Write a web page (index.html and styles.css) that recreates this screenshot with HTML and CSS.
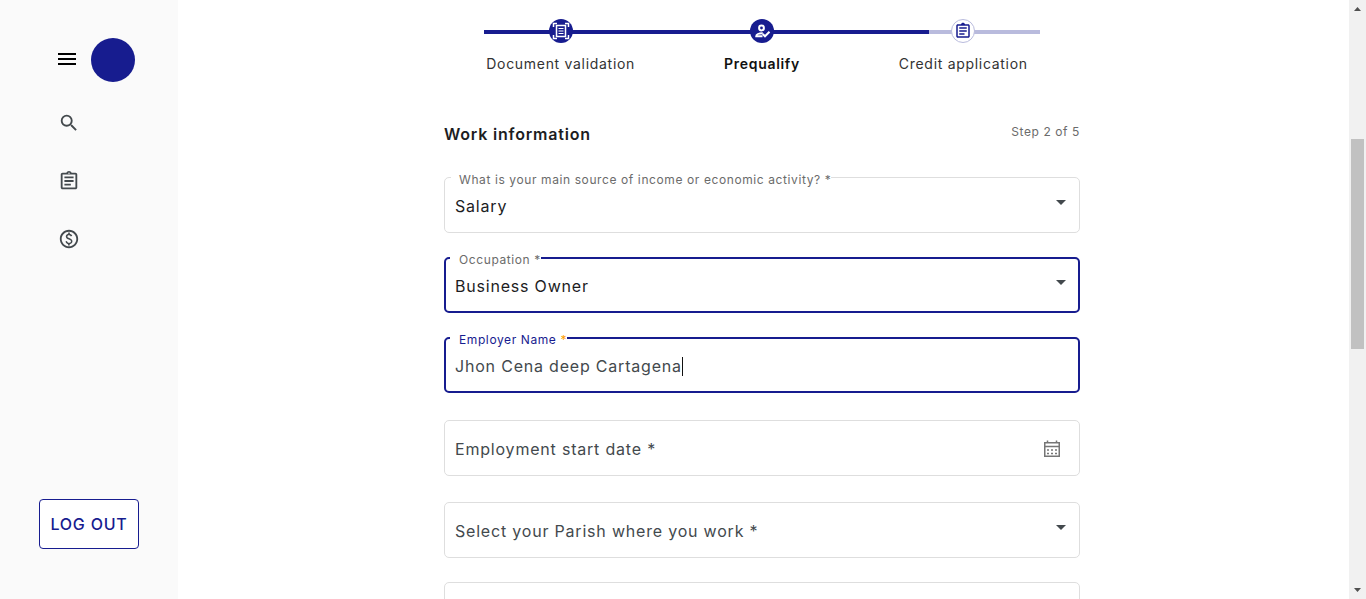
FILE: index.html
```html
<!DOCTYPE html>
<html lang="en">
<head>
<meta charset="utf-8">
<meta name="viewport" content="width=device-width, initial-scale=1">
<title>Work information</title>
<link rel="stylesheet" href="styles.css">
</head>
<body>
<div class="app">
  <aside class="sidebar">
    <div class="brand">
      <button class="icon-button menu" type="button" aria-label="Menu">
        <svg class="icon" viewBox="0 0 24 24"><path d="M3 18h18v-2H3v2zm0-5h18v-2H3v2zm0-7v2h18V6H3z"/></svg>
      </button>
      <span class="avatar"></span>
    </div>
    <nav class="nav">
      <a class="nav-link" href="#" aria-label="Search">
        <svg class="icon" viewBox="0 0 24 24"><path d="M15.500 14h-.79l-.28-.27A6.470 6.470 0 0 0 16 9.500 6.500 6.500 0 1 0 9.500 16c1.610 0 3.090-.59 4.230-1.570l.27.28v.79l5 4.990L20.490 19l-4.990-5zm-6 0C7.010 14 5 11.990 5 9.500S7.010 5 9.500 5 14 7.010 14 9.500 11.990 14 9.500 14z"/></svg>
      </a>
      <a class="nav-link" href="#" aria-label="Applications">
        <svg class="icon" viewBox="0 0 24 24"><path d="M7 15h7v2H7zm0-4h10v2H7zm0-4h10v2H7zm12-4h-4.180C14.400 1.840 13.300 1 12 1s-2.400.84-2.820 2H5c-1.100 0-2 .9-2 2v14c0 1.100.9 2 2 2h14c1.100 0 2-.9 2-2V5c0-1.100-.9-2-2-2zm-7-.25c.41 0 .75.34.75.75s-.34.75-.75.75-.75-.34-.75-.75.34-.75.75-.75zM19 19H5V5h14v14z"/></svg>
      </a>
      <a class="nav-link" href="#" aria-label="Payments">
        <svg class="icon" viewBox="0 0 24 24"><path d="M12 2C6.480 2 2 6.480 2 12s4.480 10 10 10 10-4.480 10-10S17.520 2 12 2zm0 18c-4.410 0-8-3.590-8-8s3.590-8 8-8 8 3.590 8 8-3.590 8-8 8zm.89-8.900c-1.780-.59-2.640-.96-2.640-1.900 0-1.020 1.110-1.390 1.810-1.390 1.310 0 1.790.99 1.900 1.340l1.580-.67c-.15-.44-.82-1.910-2.660-2.230V5h-1.750v1.260c-2.600.56-2.620 2.850-2.620 2.960 0 2.270 2.250 2.910 3.350 3.310 1.580.56 2.280 1.070 2.280 2.030 0 1.130-1.050 1.610-1.980 1.610-1.820 0-2.340-1.870-2.400-2.090l-1.660.67c.63 2.190 2.280 2.780 2.900 2.960V19h1.750v-1.240c.52-.09 3.020-.59 3.020-3.220.01-1.390-.6-2.610-2.880-3.440z"/></svg>
      </a>
    </nav>
    <button class="logout" type="button">LOG OUT</button>
  </aside>

  <main class="main">
    <div class="stepper">
      <div class="track"><div class="track-fill" style="width: 80%"></div></div>
      <ol class="steps">
        <li class="step">
          <span class="dot">
            <svg viewBox="0 0 24 24" fill="none" stroke="currentColor"><path stroke-width="1.500" d="M4.500 8V4.500H8M16 4.500h3.500V8M19.500 16v3.500H16M8 19.500H4.500V16"/><path stroke-width="1.500" d="M7.500 6.500h9v11h-9z"/><path stroke-width="1" d="M9.500 9.500h5M9.500 12h5M9.500 14.500h5"/></svg>
          </span>
          <span>Document validation</span>
        </li>
        <li class="step current">
          <span class="dot">
            <svg viewBox="0 0 24 24" fill="none" stroke="currentColor"><circle cx="11.500" cy="9" r="2.400" stroke-width="2"/><path stroke-width="1.900" d="M12.500 17.200H6.200C6.200 15.200 8.500 14.300 12.800 14.300"/><path stroke-width="2" d="m12.700 15 2.300 2.300 4.500-4.500"/></svg>
          </span>
          <span>Prequalify</span>
        </li>
        <li class="step">
          <span class="dot pending">
            <svg class="dot-icon" viewBox="0 0 24 24"><path fill="currentColor" d="M7 15h7v2H7zm0-4h10v2H7zm0-4h10v2H7zm12-4h-4.180C14.400 1.840 13.300 1 12 1s-2.400.84-2.820 2H5c-1.100 0-2 .9-2 2v14c0 1.100.9 2 2 2h14c1.100 0 2-.9 2-2V5c0-1.100-.9-2-2-2zM19 19H5V5h14v14z"/></svg>
          </span>
          <span>Credit application</span>
        </li>
      </ol>
    </div>

    <form class="form">
      <header class="form-head">
        <h1 class="title">Work information</h1>
        <span class="count">Step 2 of 5</span>
      </header>

      <div class="field">
        <label class="label" for="income">What is your main source of income or economic activity? *</label>
        <select class="control" id="income"><option>Salary</option></select>
        <svg class="arrow" viewBox="0 0 10 5"><path d="M0 0h10L5 5z"/></svg>
      </div>

      <div class="field active">
        <label class="label" for="occupation">Occupation *</label>
        <select class="control" id="occupation"><option>Business Owner</option></select>
        <svg class="arrow" viewBox="0 0 10 5"><path d="M0 0h10L5 5z"/></svg>
      </div>

      <div class="field active">
        <label class="label focused" for="employer">Employer Name <span class="required">*</span></label>
        <input class="control typed" id="employer" type="text" value="Jhon Cena deep Cartagena">
        <span class="caret"></span>
      </div>

      <div class="field date">
        <input class="control" id="start" type="text" placeholder="Employment start date *" aria-label="Employment start date">
        <button class="icon-button calendar" type="button" aria-label="Open calendar">
          <svg viewBox="0 0 18 20" fill="none" stroke="currentColor"><path stroke-width="1.500" d="M1.750 3.750h14.500v13.500H1.750zM1.750 7.500h14.500M4.500 1.500v2M13.500 1.500v2"/><path stroke-width="1.500" stroke-dasharray="2 2" d="M4 11h10M4 14.500h10"/></svg>
        </button>
      </div>

      <div class="field">
        <select class="control unset" aria-label="Parish"><option>Select your Parish where you work *</option></select>
        <svg class="arrow" viewBox="0 0 10 5"><path d="M0 0h10L5 5z"/></svg>
      </div>

      <div class="field">
        <input class="control" type="text" aria-label="Work address">
      </div>
    </form>
  </main>

  <div class="scrollbar">
    <svg class="scroll-arrow" viewBox="0 0 17 17"><path d="M5 11h7L8.500 7z"/></svg>
    <div class="thumb"></div>
    <svg class="scroll-arrow last" viewBox="0 0 17 17"><path d="M5 6h7l-3.500 4z"/></svg>
  </div>
</div>
</body>
</html>
```
FILE: styles.css
```css
:root {
  --primary: #171c8f;
  --ink: #1d1d1f;
  --slate: #43494d;
  --line: #dedede;
  --tracking: 0.05em;
}

* {
  box-sizing: border-box;
  letter-spacing: var(--tracking);
}

body {
  margin: 0;
  font-family: Inter, "Liberation Sans", sans-serif;
  font-size: 16px;
  color: var(--ink);
  background: #fff;
}

button,
input,
select {
  font: inherit;
}

.app {
  display: flex;
  height: 100vh;
  overflow: hidden;
}

.sidebar {
  display: flex;
  flex-direction: column;
  flex: 0 0 178px;
  padding: 38px 39px 50px;
  background: #fafafa;
}

.brand {
  display: flex;
  align-items: center;
  gap: 12px;
  padding-left: 16px;
}

.icon-button {
  display: flex;
  padding: 0;
  border: 0;
  background: none;
  cursor: pointer;
}

.icon {
  display: block;
  width: 24px;
  height: 24px;
  fill: currentColor;
}

.menu {
  padding-bottom: 2px;
  color: #000;
}

.avatar {
  flex: none;
  width: 44px;
  height: 44px;
  border-radius: 50%;
  background: var(--primary);
}

.nav {
  display: flex;
  flex-direction: column;
  gap: 36px;
  padding: 30px 0 0 19px;
}

.nav-link {
  display: flex;
  color: var(--slate);
}

.nav-link .icon {
  width: 22px;
  height: 22px;
}

.logout {
  height: 50px;
  margin-top: auto;
  padding: 0;
  border: 1px solid var(--primary);
  border-radius: 4px;
  background: #fff;
  color: var(--primary);
  font-weight: 500;
  white-space: nowrap;
}

.main {
  flex: 1;
  min-width: 0;
  padding: 19px 3px 0 0;
}

.stepper {
  display: grid;
  max-width: 604px;
  margin: 0 auto;
}

.track {
  grid-area: 1 / 1;
  height: 4px;
  margin: 11px 24px 0;
  background: #b9bbdd;
}

.track-fill {
  height: 100%;
  background: var(--primary);
}

.steps {
  grid-area: 1 / 1;
  display: grid;
  grid-template-columns: repeat(3, 1fr);
  margin: 0;
  padding: 0;
  list-style: none;
  font-size: 14px;
  line-height: 20px;
  color: #333;
}

.step {
  display: flex;
  flex-direction: column;
  align-items: center;
  gap: 11px;
}

.current {
  color: #111;
  font-weight: 600;
}

.dot {
  display: flex;
  align-items: center;
  justify-content: center;
  width: 24px;
  height: 24px;
  border-radius: 50%;
  background: var(--primary);
  color: #fff;
}

.pending {
  border: 1px solid #b9bbdd;
  background: #fff;
  color: var(--primary);
}

.dot-icon {
  width: 18px;
  height: 18px;
}

.form {
  display: flex;
  flex-direction: column;
  gap: 24px;
  max-width: 636px;
  margin: 48px auto 0;
}

.form-head {
  display: flex;
  justify-content: space-between;
  margin-bottom: 7px;
  line-height: 24px;
}

.title {
  margin: 0;
  font-size: 16px;
  font-weight: 600;
}

.count {
  font-size: 12px;
  line-height: 20px;
  color: #6b6b6b;
}

.field {
  position: relative;
  display: flex;
  align-items: center;
  height: 56px;
  flex: none;
  padding: 2px 13px 0 10px;
  border: 1px solid var(--line);
  border-radius: 5px;
}

.active {
  padding: 2px 12px 0 9px;
  border: 2px solid var(--primary);
}

.date {
  margin: 3px 0 2px;
}

.label {
  position: absolute;
  top: -7px;
  left: 6px;
  padding-left: 8px;
  background: #fff;
  font-size: 12px;
  line-height: 18px;
  color: #6b6b6b;
}

.active .label {
  top: -8px;
  left: 4px;
  padding-left: 9px;
}

.active .focused {
  color: var(--primary);
}

.required {
  color: #ffa000;
}

.control {
  flex: 1;
  min-width: 0;
  padding: 0;
  border: 0;
  outline: 0;
  appearance: none;
  background: none;
  line-height: 24px;
  color: var(--ink);
}

.control::placeholder,
.unset {
  color: var(--slate);
  opacity: 1;
}

.typed {
  flex: none;
  field-sizing: content;
  max-width: 100%;
  color: var(--slate);
}

.caret {
  width: 1px;
  height: 19px;
  background: #111;
}

.arrow {
  width: 10px;
  height: 5px;
  margin-bottom: 8px;
  fill: var(--slate);
}

.calendar {
  padding-right: 5px;
  color: #757575;
}

.calendar svg {
  width: 18px;
  height: 20px;
}

.scrollbar {
  display: grid;
  grid-template-rows: 17px 122fr 210fr 233fr 17px;
  flex: 0 0 17px;
  background: #f1f1f1;
}

.thumb {
  grid-row: 3;
  margin: 0 2px;
  background: #c1c1c1;
}

.scroll-arrow {
  width: 17px;
  height: 17px;
  fill: #505050;
}

.last {
  grid-row: 5;
}
```
